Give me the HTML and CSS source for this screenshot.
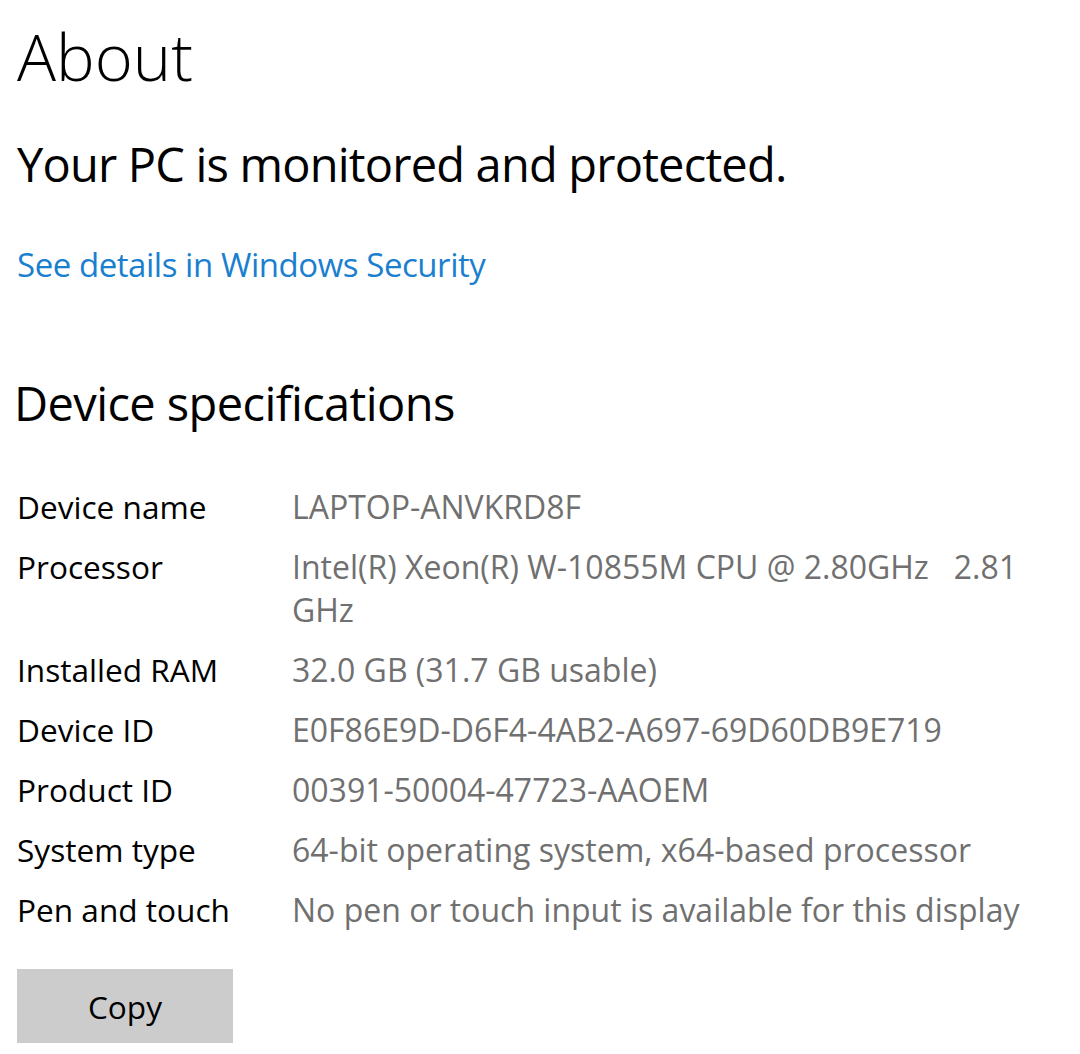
FILE: index.html
```html
<!DOCTYPE html>
<html lang="en">
<head>
<meta charset="utf-8">
<title>About</title>
<link rel="stylesheet" href="styles.css">
</head>
<body>
<main class="page">
  <h1 class="title">About</h1>
  <p class="status">Your PC is monitored and protected.</p>
  <a class="link" href="#">See details in Windows Security</a>
  <h2 class="section">Device specifications</h2>
  <dl class="specs">
    <dt class="label">Device name</dt>
    <dd class="value">LAPTOP-ANVKRD8F</dd>
    <dt class="label">Processor</dt>
    <dd class="value">Intel(R) Xeon(R) W-10855M CPU @ 2.80GHz&nbsp;&nbsp; 2.81 GHz</dd>
    <dt class="label">Installed RAM</dt>
    <dd class="value">32.0 GB (31.7 GB usable)</dd>
    <dt class="label">Device ID</dt>
    <dd class="value">E0F86E9D-D6F4-4AB2-A697-69D60DB9E719</dd>
    <dt class="label">Product ID</dt>
    <dd class="value">00391-50004-47723-AAOEM</dd>
    <dt class="label">System type</dt>
    <dd class="value">64-bit operating system, x64-based processor</dd>
    <dt class="label">Pen and touch</dt>
    <dd class="value">No pen or touch input is available for this display</dd>
  </dl>
  <button class="copy" type="button">Copy</button>
</main>
</body>
</html>
```
FILE: styles.css
```css
html, body {
  margin: 0;
  padding: 0;
  background: #ffffff;
}
body {
  font-family: "Open Sans", "Noto Sans", sans-serif;
  color: #000000;
}
.page {
  padding-left: 17px;
  display: flex;
  flex-direction: column;
  align-items: flex-start;
}
.title {
  margin: 0;
  font-size: 65px;
  font-weight: 300;
  line-height: 112px;
}
.status {
  margin: 17px 0 0;
  font-size: 47px;
  font-weight: 400;
  line-height: 70px;
  letter-spacing: -0.8px;
}
.link {
  margin-top: 42px;
  font-size: 33px;
  line-height: 48px;
  letter-spacing: -0.45px;
  color: #1a7fcf;
  text-decoration: none;
}
.section {
  margin: 79px 0 0 -3px;
  font-size: 47px;
  font-weight: 400;
  line-height: 70px;
  letter-spacing: -0.6px;
}
.specs {
  margin: 47px 0 0;
  display: grid;
  grid-template-columns: 275px 760px;
  row-gap: 17px;
  line-height: 43px;
}
.label {
  margin: 0;
  font-size: 31.6px;
  color: #000000;
}
.value {
  margin: 0;
  font-size: 32px;
  color: #707070;
}
.copy {
  margin-top: 38px;
  width: 216px;
  height: 74px;
  border: none;
  background: #cccccc;
  font-family: inherit;
  font-size: 31.6px;
  color: #000000;
  padding: 0;
}
```
